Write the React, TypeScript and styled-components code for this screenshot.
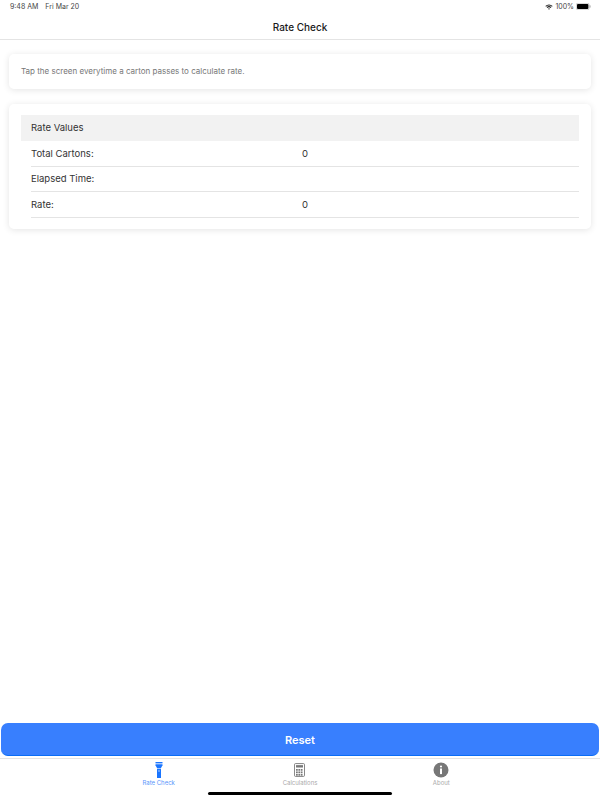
import React from "react";
import styled, { createGlobalStyle } from "styled-components";

const GlobalStyle = createGlobalStyle`
  html, body {
    margin: 0;
    padding: 0;
    background: #fff;
    font-family: Inter, "Liberation Sans", sans-serif;
  }
`;

const Screen = styled.div`
  width: 600px;
  height: 800px;
  display: flex;
  flex-direction: column;
  overflow: hidden;
  background: #fff;
`;

const StatusBar = styled.div`
  height: 13px;
  padding: 0 9px 0 10px;
  display: flex;
  align-items: center;
  justify-content: space-between;
  font-size: 7px;
  color: #444;
`;

const StatusGroup = styled.div`
  display: flex;
  align-items: center;
  gap: 2px;
`;

const DateText = styled.span`
  margin-left: 5px;
`;

const NavBar = styled.div`
  height: 27px;
  padding-top: 1px;
  box-sizing: border-box;
  display: flex;
  align-items: center;
  justify-content: center;
  font-size: 10px;
  font-weight: 500;
  color: #1a1a1a;
  border-bottom: 1px solid #e4e4e4;
`;

const Content = styled.div`
  flex: 1;
  display: flex;
  flex-direction: column;
  gap: 15px;
  padding: 14px 9px 0;
`;

const Card = styled.div`
  background: #fff;
  border-radius: 5px;
  box-shadow: 0 1px 7px rgba(0, 0, 0, 0.11);
`;

const HintCard = styled(Card)`
  height: 35px;
  padding: 0 12px 1px;
  box-sizing: border-box;
  display: flex;
  align-items: center;
  font-size: 8px;
  color: #777;
`;

const ValuesCard = styled(Card)`
  padding: 11px 12px 11.5px;
`;

const TableHeader = styled.div`
  height: 26px;
  padding: 0 10px 1px;
  box-sizing: border-box;
  display: flex;
  align-items: center;
  background: #f2f2f2;
  font-size: 9.5px;
  color: #333;
`;

const Row = styled.div`
  height: 25.5px;
  box-sizing: border-box;
  margin-left: 10px;
  display: flex;
  align-items: center;
  border-bottom: 1px solid #e4e4e4;
  font-size: 9.5px;
  color: #333;
`;

const RowLabel = styled.span`
  width: 271px;
`;

const ResetButton = styled.button`
  height: 33px;
  margin: 0 1px 2px;
  padding: 2px 0 0;
  border: none;
  border-bottom: 1px solid #0a6cf5;
  border-radius: 7px;
  background: #387ffe;
  color: #fff;
  font-family: inherit;
  font-size: 11px;
  font-weight: 600;
`;

const TabBar = styled.div`
  height: 42px;
  padding: 3px 88px 0;
  position: relative;
  display: grid;
  grid-template-columns: repeat(3, 1fr);
  border-top: 1px solid #e4e4e4;
  box-sizing: border-box;
`;

const Tab = styled.div<{ $active?: boolean }>`
  display: flex;
  flex-direction: column;
  align-items: center;
  gap: 1px;
  font-size: 6px;
  color: ${(p) => (p.$active ? "#5b96fb" : "#aaa")};
`;

const HomeIndicator = styled.div`
  position: absolute;
  left: 208px;
  bottom: 5px;
  width: 184px;
  height: 3px;
  border-radius: 2px;
  background: #000;
`;

function WifiIcon() {
  return (
    <svg width="8" height="6" viewBox="0 0 18 14">
      <path d="M0.5 4.5a12 12 0 0 1 17 0l-1.7 1.8a9.6 9.6 0 0 0-13.6 0z" fill="#222" />
      <path d="M3.6 7.6a7.7 7.7 0 0 1 10.8 0l-1.7 1.8a5.2 5.2 0 0 0-7.4 0z" fill="#222" />
      <path d="M6.8 10.8a3.2 3.2 0 0 1 4.4 0L9 13.5z" fill="#222" />
    </svg>
  );
}

function BatteryIcon() {
  return (
    <svg width="15" height="7" viewBox="0 0 15 7">
      <rect x="0.25" y="0.25" width="12.9" height="6.5" rx="1.6" fill="none" stroke="#999" strokeWidth="0.5" />
      <rect x="1" y="1" width="11.4" height="5" rx="1" fill="#000" />
      <rect x="13.6" y="2.3" width="0.9" height="2.4" rx="0.4" fill="#999" />
    </svg>
  );
}

function FlashlightIcon() {
  return (
    <svg width="8" height="16" viewBox="0 0 8 16">
      <rect x="0.5" y="0" width="7" height="1.4" fill="#1a75ff" />
      <path d="M0.5 2.3h7v1L6 6h-4L0.5 3.3z" fill="#1a75ff" />
      <path d="M2 6.6h4V16H2z" fill="#1a75ff" />
      <circle cx="4" cy="9" r="0.8" fill="#bcd6ff" />
    </svg>
  );
}

function CalculatorIcon() {
  const keys = [];
  for (let r = 0; r < 3; r++) {
    for (let c = 0; c < 3; c++) {
      keys.push(<rect key={`${r}-${c}`} x={2.2 + c * 2.6} y={6.4 + r * 2.7} width="1.9" height="1.9" fill="#777" />);
    }
  }
  return (
    <svg width="11" height="16" viewBox="0 0 12 15">
      <rect x="0.5" y="0.5" width="11" height="14" rx="1.2" fill="none" stroke="#777" />
      <rect x="2.2" y="2.2" width="7.6" height="2.6" fill="#777" />
      {keys}
    </svg>
  );
}

function InfoIcon() {
  return (
    <svg width="16" height="16" viewBox="0 0 16 16">
      <circle cx="8" cy="8" r="7.5" fill="#777" />
      <circle cx="8" cy="4.5" r="1.1" fill="#fff" />
      <rect x="7" y="6.5" width="2" height="5.6" fill="#fff" />
    </svg>
  );
}

export default function App() {
  return (
    <Screen>
      <GlobalStyle />
      <StatusBar>
        <StatusGroup>
          <span>9:48 AM</span>
          <DateText>Fri Mar 20</DateText>
        </StatusGroup>
        <StatusGroup>
          <WifiIcon />
          <span>100%</span>
          <BatteryIcon />
        </StatusGroup>
      </StatusBar>
      <NavBar>Rate Check</NavBar>
      <Content>
        <HintCard>Tap the screen everytime a carton passes to calculate rate.</HintCard>
        <ValuesCard>
          <TableHeader>Rate Values</TableHeader>
          <Row>
            <RowLabel>Total Cartons:</RowLabel>
            <span>0</span>
          </Row>
          <Row>
            <RowLabel>Elapsed Time:</RowLabel>
          </Row>
          <Row>
            <RowLabel>Rate:</RowLabel>
            <span>0</span>
          </Row>
        </ValuesCard>
      </Content>
      <ResetButton>Reset</ResetButton>
      <TabBar>
        <Tab $active>
          <FlashlightIcon />
          Rate Check
        </Tab>
        <Tab>
          <CalculatorIcon />
          Calculations
        </Tab>
        <Tab>
          <InfoIcon />
          About
        </Tab>
        <HomeIndicator />
      </TabBar>
    </Screen>
  );
}
